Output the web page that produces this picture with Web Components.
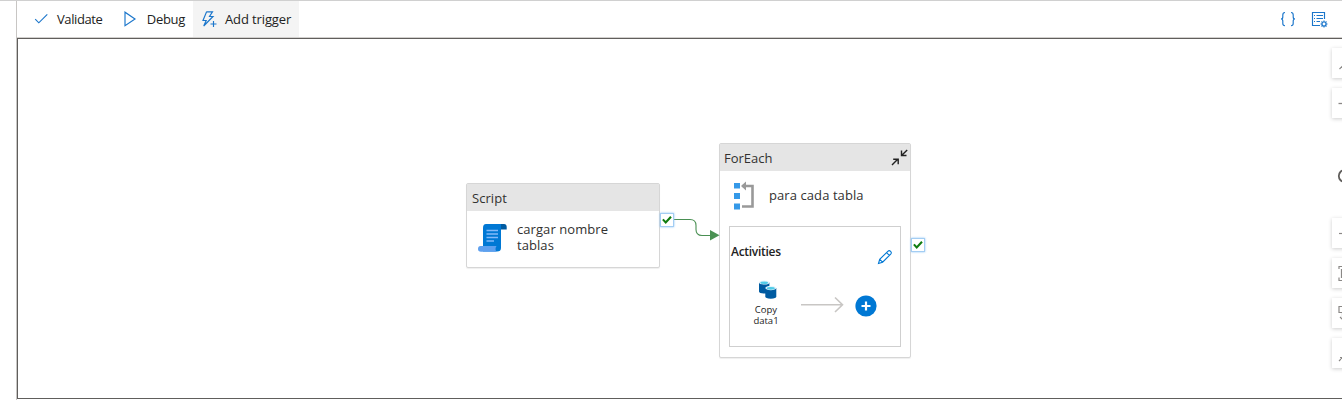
<!DOCTYPE html>
<html lang="en">
<head>
<meta charset="utf-8">
<title>Pipeline editor</title>
<style>
html,body{margin:0;width:1342px;height:400px;overflow:hidden;background:#fff}
body{font-family:"Open Sans","Noto Sans",sans-serif;color:#222}
</style>
</head>
<body>
<pipeline-editor></pipeline-editor>
<script>
function define(name, html) {
  const t = document.createElement('template');
  t.innerHTML = html;
  customElements.define(name, class extends HTMLElement {
    constructor() {
      super();
      this.attachShadow({mode: 'open'}).appendChild(t.content.cloneNode(true));
    }
  });
}

define('tool-button', `
<style>
:host{display:flex;align-items:center;box-sizing:border-box;height:36px;padding:0 8px;font-size:13px;white-space:nowrap}
:host([active]){background:#f4f4f4}
.icon{display:flex;width:16px;margin-right:8px}
</style><span class="icon"><slot name="icon"></slot></span><slot></slot>`);

define('status-port', `
<style>
:host{display:block;box-sizing:border-box;width:14px;height:14px;background:#fff;border:1px solid #a3cdf3;box-shadow:0 0 2px #8cc3f5}
svg{display:block}
</style><svg width="12" height="12" viewBox="0 0 12 12"><path d="M1.9 5.4 4.7 8.4 10 2.8" fill="none" stroke="#107c10" stroke-width="2.1"/></svg>`);

define('activity-card', `
<style>
:host{display:flex;flex-direction:column;box-sizing:border-box;border:1px solid #d6d6d6;border-radius:2px;background:#fff;box-shadow:0 1px 1px #0001;color:#323130;font-size:13px}
header{display:flex;align-items:center;justify-content:space-between;height:27px;flex:none;background:#e5e5e5;padding:1px 2px 0 var(--inset,5px);box-sizing:border-box}
</style><header><slot name="title"></slot><slot name="action"></slot></header><slot></slot>`);

define('float-button', `
<style>
:host{display:block;width:30px;height:30px;flex:none;background:#fff;box-shadow:0 1px 4px #0003}
::slotted(svg){display:block}
</style><slot></slot>`);

define('zoom-controls', `
<style>
:host{display:flex;flex-direction:column;gap:10px;width:30px}
.track{height:80px;display:flex;align-items:center}
svg{fill:none;stroke:#8a8886;stroke-width:1.2}
</style>
<float-button><svg width="30" height="30"><path d="M7.5 21 12 16.5"/></svg></float-button>
<float-button><svg width="30" height="30"><path d="M6.5 15.5H20" stroke-width="1.3"/></svg></float-button>
<div class="track"><svg width="30" height="30"><circle cx="12.8" cy="23" r="6" stroke="#605e5c" stroke-width="1.8"/></svg></div>
<float-button><svg width="30" height="30"><path d="M7 15.5H20"/></svg></float-button>
<float-button><svg width="30" height="30"><path d="M7 11V8.5H10.5M7 19.5V22.5H10.5M16 11.5H9.5V19.5H16"/></svg></float-button>
<float-button><svg width="30" height="30"><path d="M16 8.5H7V14.5H16M10.5 14.5V21M8 19l2.5 2.5L13 19"/></svg></float-button>
<float-button><svg width="30" height="30"><path d="M7 23 13 17M8 19.5H10.5V22"/></svg></float-button>`);

define('activity-list', `
<style>
:host{display:flex;flex-direction:column;box-sizing:border-box;width:172px;height:121px;border:1px solid #cfcfcf;margin:0 9px;background:#fff}
.head{display:flex;justify-content:space-between;align-items:flex-start;height:51px;padding:16px 7px 0 1px;box-sizing:border-box}
b{font:600 12px/17px "Open Sans",sans-serif;letter-spacing:-.28px;color:#222}
.head svg{margin-top:6px}
.flow{display:flex;align-items:flex-start}
.copy{display:flex;flex-direction:column;align-items:center;width:40px;margin-left:16px;padding-top:2px;font-size:9.5px;line-height:11px;text-align:center;letter-spacing:0;color:#222}
.copy svg{margin:0 0 5px 4px}
.arrow{margin:18px 0 0 15px}
.plus{margin:17px 0 0 11px}
</style>
<div class="head"><b>Activities</b><svg width="16" height="16" viewBox="0 0 16 16" fill="none" stroke="#0078d4" stroke-width="1.1"><path d="M1.5 14.5 2.7 10.4 10.8 2.3Q12.2 1 13.6 2.3 15 3.7 13.7 5.1L5.6 13.2ZM2.7 10.4l2.9 2.8M9.5 3.6l2.9 2.8"/></svg></div>
<div class="flow">
<div class="copy"><svg width="18" height="19" viewBox="0 0 18 19"><path d="M0 2.5V11.5Q0 13.5 5.2 13.5T10.4 11.5V2.5Z" fill="#005ba1"/><ellipse cx="5.2" cy="2.5" rx="5.2" ry="2" fill="#e6f5fb"/><ellipse cx="5.2" cy="2.8" rx="3.9" ry="1.2" fill="#50cbe8"/><path d="M6.3 8V16.6Q6.3 18.7 11.8 18.7T17.3 16.6V8Z" fill="#005ba1"/><ellipse cx="11.8" cy="8" rx="5.5" ry="2.2" fill="#e6f5fb"/><ellipse cx="11.8" cy="8.3" rx="4.1" ry="1.4" fill="#50cbe8"/></svg>Copy<br>data1</div>
<svg class="arrow" width="43" height="18" viewBox="0 0 43 18"><path d="M0 8.7H41M34 1.5 41.5 8.7 34 16" fill="none" stroke="#c8c6c4" stroke-width="1.6"/></svg>
<svg class="plus" width="22" height="22" viewBox="0 0 22 22"><circle cx="11" cy="11" r="10.6" fill="#0078d4"/><path d="M11 6.5V15.5M6.5 11H15.5" stroke="#fff" stroke-width="2.2"/></svg>
</div>`);

define('pipeline-canvas', `
<style>
:host{display:block;position:relative;box-sizing:border-box;height:361px;border:1px solid #605e5c;border-right:0;overflow:hidden;background:#fff}
.script{position:absolute;left:448px;top:144px;width:194px;height:85px}
.each{position:absolute;left:701px;top:104px;width:192px;height:215px;--inset:4px}
.link{position:absolute;left:655px;top:174px}
.p1{position:absolute;left:642px;top:174px}
.p2{position:absolute;left:893px;top:199px}
zoom-controls{position:absolute;left:1314px;top:9px}
.body{display:flex;align-items:flex-start;line-height:16px}
.script .body{padding:10px 0 0 11px;gap:8px}
.each .body{padding:10px 0 0 13px;gap:14px;height:55px;box-sizing:border-box}
</style>
<activity-card class="script"><span slot="title" style="letter-spacing:.05px">Script</span>
<div class="body"><svg style="margin-top:3px" width="31" height="29" viewBox="0 0 31 29"><path d="M7 0H25V4.5H23V24Q23 27.5 19 27.5H5V4Q5 0 8 0Z" fill="#0078d4"/><path d="M23 0H26Q28.7 0 28.7 3V5.5H23Z" fill="#005ba1"/><path d="M2.5 22H18.5Q16.5 25 18.5 27.8H3Q0 27.8 0 25T2.5 22Z" fill="#5ea0ef"/><path d="M8.5 6.5H20M8.5 10H20M8.5 13.5H20M8.5 17H16" stroke="#83b9f9" stroke-width="1.5"/></svg><span style="letter-spacing:.07px">cargar nombre<br>tablas</span></div></activity-card>
<activity-card class="each"><span slot="title" style="letter-spacing:-.02px">ForEach</span><svg slot="action" width="17" height="18" viewBox="0 0 17 18" fill="none" stroke="#222" stroke-width="1.4"><path d="M16.2 1 10.8 6.3M10.5 1.5V6.5H15.5M1 16 6.7 10.3M2.2 10.3H7.2V15.3"/></svg>
<div class="body"><svg width="22" height="29" viewBox="0 0 22 29"><path d="M1 2H7V7.5H1ZM1 12H7V18H1ZM1 22.5H7V28.5H1Z" fill="#3599e8"/><path d="M9.5 5H19.5V25.5H9" fill="none" stroke="#999" stroke-width="2.6"/><path d="M8 5 13 .5V9.5Z" fill="#999"/></svg><span style="margin-top:6px;letter-spacing:.08px">para cada tabla</span></div>
<activity-list></activity-list></activity-card>
<svg class="link" width="48" height="30" viewBox="0 0 48 30"><path d="M0 6.5H17Q23 6.5 23 12.5V16.5Q23 22.5 29 22.5H38" fill="none" stroke="#498f52" stroke-width="1.1"/><path d="M37 17V27.5L46.5 22.2Z" fill="#4a9153"/></svg>
<status-port class="p1"></status-port><status-port class="p2"></status-port>
<zoom-controls></zoom-controls>`);

define('pipeline-editor', `
<style>
:host{display:block;box-sizing:border-box;height:400px;border-top:1px solid #d0d0d0;padding-left:16px}
.shell{border-left:1px solid #c8c6c4;height:399px}
.bar{display:flex;align-items:center;height:37px;box-sizing:border-box;border-bottom:1px solid #d2d0ce;padding-left:8px}
.right{display:flex;gap:14px;margin-left:auto;padding-right:14px}
svg{fill:none;stroke:#1b76cb;stroke-width:1.15;flex:none}
</style>
<div class="shell"><div class="bar">
<tool-button style="letter-spacing:-.4px;width:90px"><svg slot="icon" width="16" height="16"><path d="M2.2 8.2 5.8 11.8 14.3 3.4"/></svg>Validate</tool-button>
<tool-button style="letter-spacing:-.3px;width:78px"><svg slot="icon" width="16" height="16" style="margin-left:-1px"><path d="M3 1.2V14.7L13 8Z"/></svg>Debug</tool-button>
<tool-button active style="letter-spacing:-.12px;width:106px"><svg slot="icon" width="17" height="17"><path d="M5.6.8H11.5L8.5 5.5H12L2.7 15 5.2 9.5H2L5.6.8M12.5 10V16M9.5 13H15.5"/></svg>Add trigger</tool-button>
<div class="right"><svg width="18" height="17"><path d="M6 1.5Q3.8 1.5 3.8 4V6Q3.8 8 2 8 3.8 8 3.8 10V12.5Q3.8 14.7 6 14.7M12 1.5Q14.2 1.5 14.2 4V6Q14.2 8 16 8 14.2 8 14.2 10V12.5Q14.2 14.7 12 14.7"/></svg>
<svg width="17" height="17"><path d="M9 14.5H1.5V1.5H13.5V8M3 4.5H4M5.5 4.5H12M3 7.5H4M5.5 7.5H12M3 10.5H4M5.5 10.5H9"/><circle cx="13" cy="13" r="2"/><path d="M13 9.5V11M13 15V16.5M9.5 13H11M15 13H16.5M10.5 10.5 11.6 11.6M14.4 14.4 15.5 15.5M10.5 15.5 11.6 14.4M14.4 11.6 15.5 10.5"/></svg></div>
</div><pipeline-canvas></pipeline-canvas></div>`);
</script>
</body>
</html>
